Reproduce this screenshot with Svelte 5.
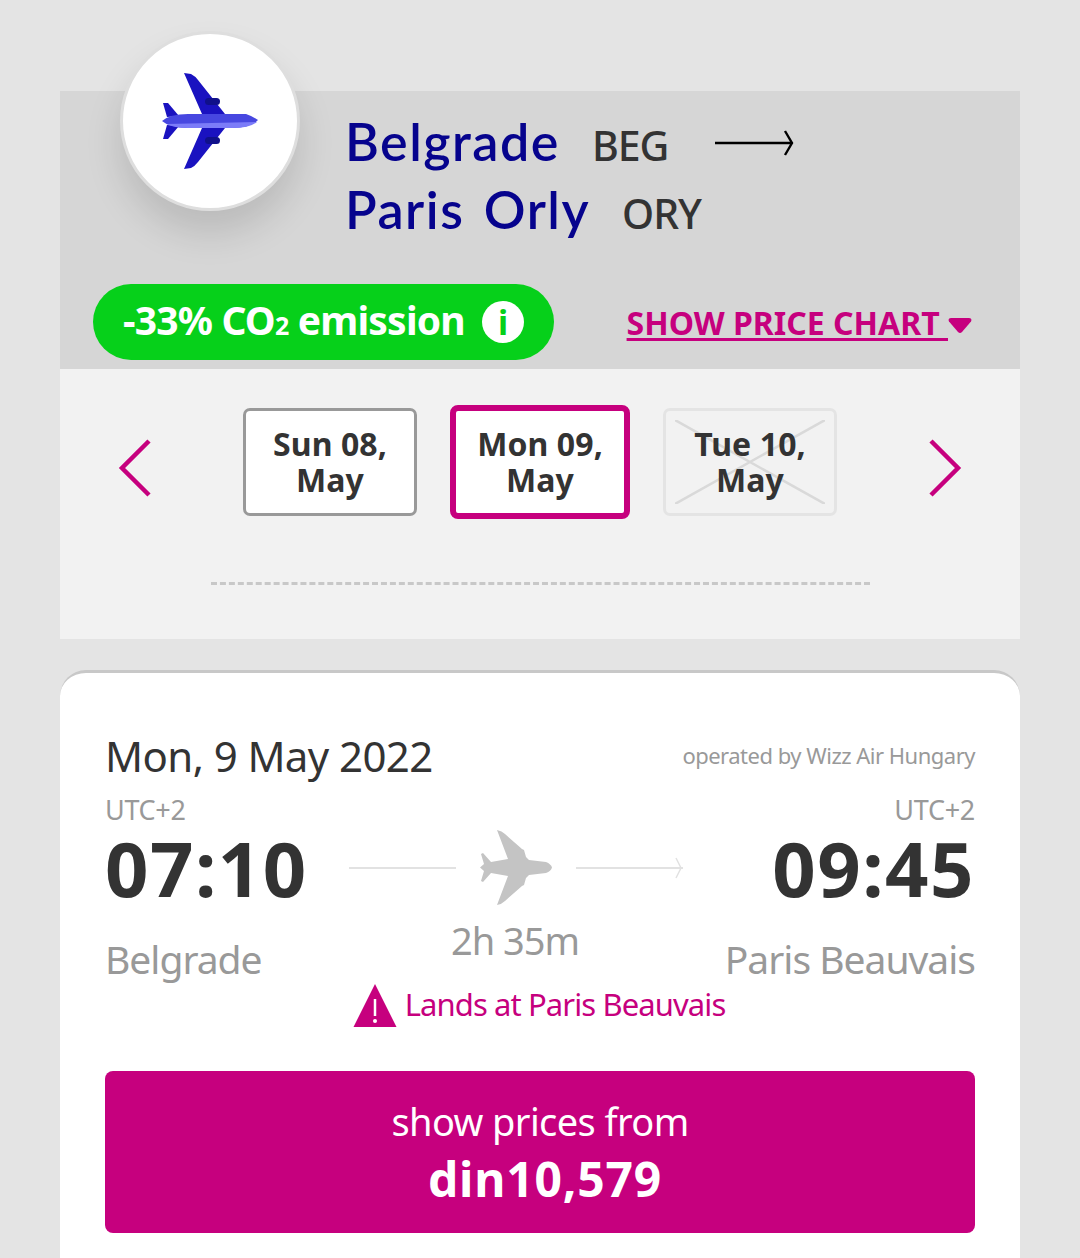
<script>
  const days = [
    { label: 'Sun 08,', month: 'May', kind: 'normal' },
    { label: 'Mon 09,', month: 'May', kind: 'selected' },
    { label: 'Tue 10,', month: 'May', kind: 'disabled' }
  ];
</script>

<main class="page">
  <section class="route">
    <div class="badge">
      <svg viewBox="0 0 96 96" width="96" height="96">
        <path d="M22 0 L29 1 Q33 3 36 7 L63 41 L40 41 Z" fill="#1a12c0"/>
        <path d="M22 96 L29 95 Q33 93 36 89 L63 55 L40 55 Z" fill="#1a12c0"/>
        <path d="M1 30 L6 30 L17 43 L5 44 Z" fill="#1a12c0"/>
        <path d="M1 66 L6 66 L17 53 L5 52 Z" fill="#1a12c0"/>
        <rect x="43" y="25" width="15" height="7" rx="3.5" fill="#10108a"/>
        <rect x="43" y="64" width="15" height="7" rx="3.5" fill="#10108a"/>
        <path d="M0 48 Q8 41 26 41 L84 41 Q90 43 96 47 Q88 55 70 55 L26 55 Q8 55 0 48 Z" fill="#4747e0"/>
        <path d="M5 51 L95 49 Q88 55 70 55 L26 55 Q12 55 5 51 Z" fill="#7c7cf8"/>
      </svg>
    </div>
    <div class="cities">
      <div class="city">
        <span class="name">Belgrade</span><span class="code">BEG</span>
        <svg class="long-arrow" viewBox="0 0 80 28" width="80" height="28">
          <path d="M1 14 H78 M71 2 L78 14 L71 26" fill="none" stroke="#000" stroke-width="2.4"/>
        </svg>
      </div>
      <div class="city">
        <span class="name">Paris Orly</span><span class="code">ORY</span>
      </div>
    </div>
    <div class="route-foot">
      <div class="co2">
        <span class="co2-text">-33% CO<span class="sub">2</span> emission</span>
        <span class="info">i</span>
      </div>
      <a class="chart" href="#chart"><span class="chart-text">SHOW PRICE CHART&nbsp;</span><svg viewBox="0 0 24 17" width="24" height="17"><path d="M3 1 H21 Q24.500 1 23 4.500 L14 15 Q12 17 10 15 L1 4.500 Q-0.500 1 3 1 Z" fill="#c6007e"/></svg></a>
    </div>
  </section>

  <section class="dates">
    <div class="day-row">
      <svg class="chev" viewBox="0 0 34 60" width="34" height="60"><path d="M31 2 L4 29 L31 56" fill="none" stroke="#c6007e" stroke-width="4.5"/></svg>
      <div class="days">
        {#each days as d}
          <button class="day {d.kind}">
            {#if d.kind === 'disabled'}
              <svg class="cross" viewBox="0 0 150 84" preserveAspectRatio="none"><path d="M0 0 L150 84 M150 0 L0 84" stroke="#d9d9d9" stroke-width="2.5"/></svg>
            {/if}
            <span class="day-text">{d.label}<br/>{d.month}</span>
          </button>
        {/each}
      </div>
      <svg class="chev" viewBox="0 0 34 60" width="34" height="60"><path d="M3 2 L30 29 L3 56" fill="none" stroke="#c6007e" stroke-width="4.5"/></svg>
    </div>
    <div class="dash"></div>
  </section>

  <section class="card">
    <div class="card-head">
      <div class="date">Mon, 9 May 2022</div>
      <div class="operator">operated by Wizz Air Hungary</div>
    </div>
    <div class="flight">
      <div class="end">
        <div class="utc">UTC+2</div>
        <div class="time">07:10</div>
        <div class="place">Belgrade</div>
      </div>
      <div class="middle">
        <div class="track">
          <span class="line"></span>
          <svg viewBox="0 0 72 75" width="72" height="75">
            <path d="M17 0 Q22 1 25 4 L42 19 L44 20 L46 27 L49 30 L66 32 Q71 34 72 37.500 Q71 41 66 43 L49 45 L46 48 L44 55 L42 56 L25 71 Q22 74 17 75 L28 46 L11 43 L3 52 L1 51 L4 41 L0 37.500 L4 34 L1 24 L3 23 L11 32 L28 29 Z" fill="#c4c4c4"/>
          </svg>
          <span class="line arrowed"><svg viewBox="0 0 8 22" width="8" height="22"><path d="M1 1 L6 11 L1 21" fill="none" stroke="#e2e2e2" stroke-width="1.5"/></svg></span>
        </div>
        <div class="duration">2h 35m</div>
      </div>
      <div class="end right">
        <div class="utc">UTC+2</div>
        <div class="time">09:45</div>
        <div class="place">Paris Beauvais</div>
      </div>
    </div>
    <div class="warning">
      <svg viewBox="0 0 44 44" width="44" height="44"><path d="M22 0 L43.500 43 H0.500 Z" fill="#c6007e"/><path d="M22 15 V32" stroke="#fff" stroke-width="2.500"/><circle cx="22" cy="37" r="2" fill="#fff"/></svg>
      <span class="warning-text">Lands at Paris Beauvais</span>
    </div>
    <button class="price">
      <span class="price-label">show prices from</span>
      <span class="price-value">din10,579</span>
    </button>
  </section>
</main>

<style>
  :global(body) {
    margin: 0;
    background: #e4e4e4;
    overflow: hidden;
  }
  .page {
    height: 1258px;
    overflow: hidden;
    box-sizing: border-box;
    padding: 91px 60px 0;
    font-family: "Noto Sans", "Open Sans", sans-serif;
    color: #333;
  }
  .route {
    position: relative;
    height: 278px;
    box-sizing: border-box;
    background: #d6d6d6;
    padding: 16px 48px 0 33px;
    display: flex;
    flex-direction: column;
  }
  .badge {
    position: absolute;
    left: 60px;
    top: -60px;
    width: 180px;
    height: 180px;
    box-sizing: border-box;
    border: 3px solid #dedede;
    border-radius: 50%;
    background: #fff;
    box-shadow: 0 22px 36px rgba(0, 0, 0, 0.13);
    display: flex;
    align-items: center;
    justify-content: center;
  }
  .cities {
    margin-left: 252px;
    display: flex;
    flex-direction: column;
  }
  .city {
    display: flex;
    align-items: baseline;
    height: 68px;
  }
  .name {
    font-family: "Lato", sans-serif;
    font-size: 52px;
    font-weight: 600;
    line-height: 68px;
    letter-spacing: 1.5px;
    word-spacing: 5px;
    color: #06038d;
  }
  .code {
    margin-left: 32px;
    font-size: 41px;
    font-weight: 500;
    letter-spacing: -1.1px;
    color: #333;
  }
  .long-arrow {
    margin-left: 46px;
    margin-top: 4px;
    align-self: center;
  }
  .route-foot {
    margin-top: 41px;
    display: flex;
    align-items: center;
    justify-content: space-between;
  }
  .co2 {
    width: 461px;
    height: 76px;
    box-sizing: border-box;
    padding: 0 30px;
    border-radius: 38px;
    background: #06d01a;
    color: #fff;
    font-size: 39px;
    font-weight: 700;
    letter-spacing: -0.8px;
    display: flex;
    align-items: center;
    justify-content: space-between;
  }
  .co2-text {
    margin-bottom: 6px;
  }
  .sub {
    font-size: 25px;
  }
  .info {
    width: 42px;
    height: 42px;
    border-radius: 50%;
    background: #fff;
    color: #06d01a;
    font-size: 34px;
    font-weight: 700;
    line-height: 42px;
    text-align: center;
    letter-spacing: 0;
  }
  .chart {
    display: flex;
    align-items: center;
    color: #c6007e;
    font-size: 32px;
    font-weight: 700;
    letter-spacing: 0;
    text-decoration: none;
  }
  .chart-text {
    text-decoration: underline;
    text-decoration-thickness: 3px;
    text-underline-offset: 3px;
    white-space: pre;
  }
  .chart svg {
    margin-top: 6px;
  }
  .dates {
    height: 270px;
    box-sizing: border-box;
    background: #f2f2f2;
    padding-top: 36px;
  }
  .day-row {
    display: flex;
    align-items: center;
    justify-content: space-between;
    padding: 0 58px;
    height: 114px;
  }
  .chev {
    margin-top: 13px;
  }
  .days {
    display: flex;
    align-items: center;
    gap: 33px;
  }
  .day {
    position: relative;
    width: 174px;
    height: 108px;
    padding: 0;
    box-sizing: border-box;
    border: 3px solid #999;
    border-radius: 7px;
    background: #fff;
    color: #333;
    font-family: "Noto Sans", sans-serif;
    font-size: 32px;
    font-weight: 700;
    line-height: 36px;
    letter-spacing: 0.1px;
  }
  .day.selected {
    width: 180px;
    height: 114px;
    border: 6px solid #c6007e;
    border-radius: 8px;
  }
  .day.disabled {
    border-color: #e4e4e4;
    background: #f2f2f2;
  }
  .cross {
    position: absolute;
    left: 9px;
    top: 9px;
    width: 150px;
    height: 84px;
  }
  .day-text {
    position: relative;
  }
  .dash {
    margin: 63px 150px 0 151px;
    border-top: 3px dashed #c8c8c8;
  }
  .card {
    margin-top: 31px;
    height: 640px;
    box-sizing: border-box;
    padding: 57px 45px 0;
    background: #fff;
    border-top: 3px solid #c8c8c8;
    border-radius: 26px 26px 0 0;
  }
  .card-head {
    display: flex;
    align-items: center;
    justify-content: space-between;
    height: 50px;
  }
  .date {
    font-size: 42px;
    letter-spacing: -0.6px;
    color: #333;
  }
  .operator {
    font-size: 22px;
    letter-spacing: -0.5px;
    color: #999;
  }
  .flight {
    display: grid;
    grid-template-columns: 244px 334px 292px;
    margin-top: 15px;
  }
  .end {
    display: flex;
    flex-direction: column;
  }
  .end.right {
    align-items: flex-end;
  }
  .utc {
    font-size: 27px;
    line-height: 30px;
    letter-spacing: -0.3px;
    color: #999;
  }
  .time {
    font-size: 76px;
    font-weight: 700;
    line-height: 86px;
    letter-spacing: 1.5px;
    color: #333;
  }
  .place {
    margin-top: 23px;
    font-size: 39px;
    line-height: 50px;
    letter-spacing: -1px;
    color: #999;
  }
  .middle {
    padding-top: 35px;
    display: flex;
    flex-direction: column;
    align-items: center;
  }
  .track {
    width: 100%;
    display: flex;
    align-items: center;
    justify-content: space-between;
  }
  .line {
    position: relative;
    width: 107px;
    height: 2px;
    background: #e2e2e2;
  }
  .arrowed svg {
    position: absolute;
    right: 0;
    top: -10px;
  }
  .duration {
    margin: 10px 0 0 -2px;
    font-size: 38px;
    line-height: 50px;
    letter-spacing: -1px;
    color: #999;
  }
  .warning {
    display: flex;
    align-items: center;
    justify-content: center;
    gap: 8px;
    padding-right: 2px;
    color: #c6007e;
    font-size: 31px;
    letter-spacing: -0.9px;
  }
  .warning-text {
    line-height: 36px;
    padding-bottom: 5px;
  }
  .price {
    width: 870px;
    height: 162px;
    margin-top: 43px;
    padding: 0 0 6px;
    border: 0;
    border-radius: 8px;
    background: #c6007e;
    color: #fff;
    font-family: "Noto Sans", sans-serif;
    display: flex;
    flex-direction: column;
    align-items: center;
    justify-content: center;
  }
  .price-label {
    font-size: 38px;
    line-height: 60px;
    letter-spacing: -0.6px;
  }
  .price-value {
    margin-left: 10px;
    font-size: 48px;
    font-weight: 700;
    line-height: 56px;
    letter-spacing: 0.8px;
  }
</style>
